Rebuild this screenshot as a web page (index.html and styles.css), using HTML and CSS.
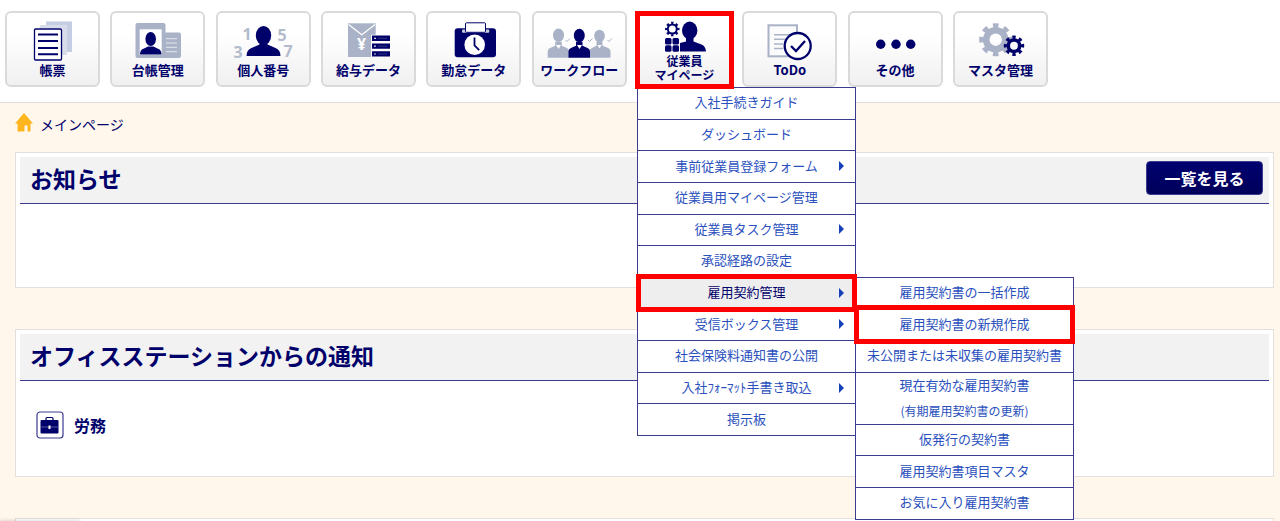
FILE: index.html
```html
<!DOCTYPE html>
<html lang="ja">
<head>
  <meta charset="UTF-8">
  <title>メインページ</title>
  <link rel="stylesheet" href="styles.css">
</head>
<body>

  <!-- Global navigation -->
  <header class="site-header">
    <ul class="global-nav">
      <li>
        <a class="tile" href="#">
          <svg class="icon" viewBox="2 2 91 49">
            <path class="pale" d="M41 10.500h26v30.500h-5v-26h-21z"/>
            <path class="pale2" d="M35 14h27v30h-5v-27h-22z"/>
            <rect x="29.500" y="18" width="27" height="31" rx="1" fill="#fff" stroke="#00006b" stroke-width="1.300"/>
            <path class="line" d="M33 23.500h20M33 30h20M33 37h20M33 43.300h20" stroke-width="2"/>
          </svg>
          <span class="label">帳票</span>
        </a>
      </li>
      <li>
        <a class="tile" href="#">
          <svg class="icon" viewBox="2 2 91 49">
            <path class="gray" d="M27.500 12h26q2 0 2 2v7.500h13.500q2 0 2 2v21.500q0 2-2 2h-41.500q-2 0-2-2v-31q0-2 2-2z"/>
            <rect x="29.700" y="18.300" width="22" height="25.400" fill="#fff"/>
            <ellipse class="navy" cx="40.700" cy="28" rx="5.300" ry="7"/>
            <path class="navy" d="M30 43.500q0-5 4-6l4-2h5.500l4 2q4 1 4 6z"/>
            <path d="M56 27.700h11M56 32h11M56 36.300h11M56 40.700h11" stroke="#e4e7ee" stroke-width="1"/>
          </svg>
          <span class="label">台帳管理</span>
        </a>
      </li>
      <li>
        <a class="tile" href="#">
          <svg class="icon" viewBox="2 2 91 49">
            <g class="digits">
              <text x="31" y="29">1</text>
              <text x="22" y="47">3</text>
              <text x="66" y="30">5</text>
              <text x="72" y="46">7</text>
            </g>
            <ellipse class="navy" cx="47.500" cy="24.500" rx="7.700" ry="9.500"/>
            <path class="navy" d="M30.500 45q0-6 5-8l8-3.500v-3h8v3l8 3.500q5 2 5 8z"/>
          </svg>
          <span class="label">個人番号</span>
        </a>
      </li>
      <li>
        <a class="tile" href="#">
          <svg class="icon" viewBox="2 2 91 49">
            <rect class="gray" x="27" y="12.300" width="27.700" height="33.700"/>
            <path d="M27.500 13.500l13.300 10.300 13.300-10.300" fill="none" stroke="#fff" stroke-width="1.200"/>
            <text class="yen" x="40.700" y="39">¥</text>
            <path d="M50 23.700h5v22.300h-5z" fill="#fafafa"/>
            <path class="navy" d="M51 24.500h18v5.500h-18zM51 32.500h18v5.300h-18zM51 40.300h18v5.300h-18z"/>
            <path d="M53 27.300h2M53 35.200h2M53 43h2" stroke="#d0d2e4" stroke-width="1.200"/>
            <path d="M57 27.300h9M57 35.200h9M57 43h9" stroke="#3f4288" stroke-width=".8"/>
          </svg>
          <span class="label">給与データ</span>
        </a>
      </li>
      <li>
        <a class="tile" href="#">
          <svg class="icon" viewBox="2 2 91 49">
            <rect class="navy" x="28.700" y="17.300" width="41.300" height="29" rx="3"/>
            <rect x="36" y="18.500" width="27.300" height="3.300" rx="1" fill="#c9ccda"/>
            <rect x="39.500" y="11.800" width="20" height="9.500" rx="1" fill="#fff" stroke="#00006b"/>
            <circle cx="48.700" cy="33.700" r="10.300" fill="#fff"/>
            <path class="line" d="M48.500 26.500v8l4.700 4.700" stroke-width="1.800"/>
          </svg>
          <span class="label">勤怠データ</span>
        </a>
      </li>
      <li>
        <a class="tile" href="#">
          <svg class="icon" viewBox="2 2 91 49">
            <g class="gray">
              <ellipse cx="26.500" cy="24.300" rx="5.500" ry="6.700"/>
              <path d="M15.700 46.700v-6q0-3 3-4l4.500-2v-4h6.500v4l4.500 2q3 1 3 4v6z"/>
              <ellipse cx="67.500" cy="25" rx="5.300" ry="6.300"/>
              <path d="M57.500 46.700v-6q0-3 3-4l4-2v-4h6v4l5 2q3 1 3 4v6z"/>
            </g>
            <g class="navy">
              <ellipse cx="47.300" cy="24.500" rx="5.500" ry="6.700"/>
              <path d="M36.500 46.700v-6q0-3 3-4l4.500-2v-4h6.500v4l4.500 2q3 1 3 4v6z"/>
            </g>
            <path d="M24 34l2.500 4 2.500-4zM45 34l2.500 4 2.500-4zM65.500 34l2 3.500 2-3.500z" fill="#fff"/>
            <path d="M33.500 29l1.500 1.500 3-3M56 29l1.500 1.500 3-3M75.500 29l1.500 1.500 3-3" fill="none" stroke="#a9b2c6"/>
          </svg>
          <span class="label">ワークフロー</span>
        </a>
      </li>
      <li class="has-menu">
        <a class="tile marked" href="#">
          <svg class="icon icon-short" viewBox="2 2 91 41">
            <circle cx="35.300" cy="18" r="4.500" fill="none" stroke="#00006b" stroke-width="2"/>
            <circle class="teeth navy-teeth" cx="35.300" cy="18" r="6" pathLength="16" stroke-width="2.500"/>
            <g class="navy">
              <rect x="28" y="27" width="6.500" height="6.500" rx="1.500"/>
              <rect x="35.500" y="27" width="6.500" height="6.500" rx="1.500"/>
              <rect x="28" y="34.300" width="6.500" height="6.500" rx="1.500"/>
              <rect x="35.500" y="34.300" width="6.500" height="6.500" rx="1.500"/>
            </g>
            <ellipse class="navy" cx="52.700" cy="19.500" rx="7.700" ry="9"/>
            <path class="navy" d="M43 40.500v-8.500l6-1.500v-4h7.500v4l8 3q4 1.500 4.500 7z"/>
          </svg>
          <span class="label label-two">従業員<br>マイページ</span>
        </a>

        <ul class="menu">
          <li><a href="#">入社手続きガイド</a></li>
          <li><a href="#">ダッシュボード</a></li>
          <li><a class="arrow" href="#">事前従業員登録フォーム</a></li>
          <li><a href="#">従業員用マイページ管理</a></li>
          <li><a class="arrow" href="#">従業員タスク管理</a></li>
          <li><a href="#">承認経路の設定</a></li>
          <li>
            <a class="arrow current marked" href="#">雇用契約管理</a>
            <ul class="menu submenu">
              <li><a href="#">雇用契約書の一括作成</a></li>
              <li><a class="marked" href="#">雇用契約書の新規作成</a></li>
              <li><a href="#">未公開または未収集の雇用契約書</a></li>
              <li><a href="#">現在有効な雇用契約書<small>(有期雇用契約書の更新)</small></a></li>
              <li><a href="#">仮発行の契約書</a></li>
              <li><a href="#">雇用契約書項目マスタ</a></li>
              <li><a href="#">お気に入り雇用契約書</a></li>
            </ul>
          </li>
          <li><a class="arrow" href="#">受信ボックス管理</a></li>
          <li><a href="#">社会保険料通知書の公開</a></li>
          <li><a class="arrow" href="#">入社ﾌｫｰﾏｯﾄ手書き取込</a></li>
          <li><a href="#">掲示板</a></li>
        </ul>
      </li>
      <li>
        <a class="tile" href="#">
          <svg class="icon" viewBox="2 2 91 49">
            <rect x="26.500" y="14.300" width="28.500" height="31" fill="#fbfbfb" stroke="#a9b2c6" stroke-width="2"/>
            <path d="M32 23.700h17M32 28.300h12M32 33h9M32 37.500h9" stroke="#a9b2c6" stroke-width="1.600"/>
            <circle cx="55.700" cy="35" r="13" fill="#fff" stroke="#00006b" stroke-width="2.300"/>
            <path class="line" d="M49 35l5 5 9-10" stroke-width="2.300"/>
          </svg>
          <span class="label">ToDo</span>
        </a>
      </li>
      <li>
        <a class="tile" href="#">
          <svg class="icon" viewBox="2 2 91 49">
            <g class="navy">
              <circle cx="32.700" cy="33.300" r="4.700"/>
              <circle cx="48" cy="33.300" r="4.700"/>
              <circle cx="62.700" cy="33.300" r="4.700"/>
            </g>
          </svg>
          <span class="label">その他</span>
        </a>
      </li>
      <li>
        <a class="tile" href="#">
          <svg class="icon" viewBox="2 2 91 49">
            <circle cx="42.700" cy="28.700" r="9.500" fill="none" stroke="#a9b2c6" stroke-width="6.500"/>
            <circle class="teeth gray-teeth" cx="42.700" cy="28.700" r="14" pathLength="16" stroke-width="5"/>
            <circle cx="61" cy="34.700" r="5.700" fill="#f8f8f8" stroke="#00006b" stroke-width="3.500"/>
            <circle class="teeth navy-teeth" cx="61" cy="34.700" r="8.500" pathLength="16" stroke-width="3.400"/>
          </svg>
          <span class="label">マスタ管理</span>
        </a>
      </li>
    </ul>
  </header>

  <!-- Breadcrumb -->
  <nav class="breadcrumb">
    <svg class="home" viewBox="0 0 18 19">
      <path d="M9 0l9 10.500h-2.500v8h-3v-6h-3v6h-7v-8h-2.500z" fill="#ffb61e"/>
    </svg>
    <a href="#">メインページ</a>
  </nav>

  <main class="content">
    <section class="panel">
      <div class="panel-head">
        <h2>お知らせ</h2>
        <button class="list-button" type="button">一覧を見る</button>
      </div>
      <div class="panel-body"></div>
    </section>

    <section class="panel">
      <div class="panel-head">
        <h2>オフィスステーションからの通知</h2>
      </div>
      <div class="panel-body">
        <h3 class="category">
          <svg class="category-icon" viewBox="0 0 28 28">
            <rect x="1" y="1" width="26" height="26" rx="3" fill="#fff" stroke="#3b3b90" stroke-width="1.200"/>
            <path d="M10 9.500v-2q0-1 1-1h5q1 0 1 1v2" fill="none" stroke="#00006b" stroke-width="1.200"/>
            <rect class="navy" x="4.500" y="9" width="18" height="13.500" rx="1"/>
            <path d="M5 16h17" stroke="#6a6aa8" stroke-width=".8"/>
            <rect x="12.500" y="14.500" width="2" height="3.500" fill="#fff"/>
          </svg>
          労務
        </h3>
      </div>
    </section>

    <section class="panel">
      <div class="panel-body"></div>
    </section>
  </main>

  <div class="status-shadow"></div>

</body>
</html>
```

FILE: styles.css
```css
* {
  box-sizing: border-box;
}

body {
  margin: 0;
  font-family: "Noto Sans CJK JP", sans-serif;
  font-size: 14px;
  color: #00006b;
  background-color: #fff7ec;
  overflow: hidden;
}

a {
  color: #00006b;
  text-decoration: none;
}

ul {
  list-style: none;
  margin: 0;
  padding: 0;
}

/* Header */
.site-header {
  padding: 11px 5px 15px;
  background-color: #fff;
  border-bottom: 1px solid #e2e0dc;
}

.global-nav {
  display: flex;
  justify-content: space-between;
  max-width: 1043px;
}

.tile {
  display: flex;
  flex-direction: column;
  width: 95px;
  height: 76px;
  border: 2px solid #dadada;
  border-radius: 6px;
  background: linear-gradient(#fff 30%, #f0f0f0);
}

.icon {
  display: block;
  height: 49px;
  flex-shrink: 0;
}

.icon-short {
  height: 41px;
}

.label {
  font-size: 13px;
  font-weight: bold;
  line-height: 16px;
  text-align: center;
  white-space: nowrap;
}

.label-two {
  font-size: 12px;
  line-height: 14px;
}

/* Icon colors */
.navy {
  fill: #00006b;
}

.gray {
  fill: #a9b2c6;
}

.pale {
  fill: #c5cde2;
}

.pale2 {
  fill: #d6dcea;
}

.line {
  fill: none;
  stroke: #00006b;
}

.teeth {
  fill: none;
  stroke-dasharray: 1 1;
  stroke-dashoffset: 0.5;
}

.navy-teeth {
  stroke: #00006b;
}

.gray-teeth {
  stroke: #a9b2c6;
}

.digits {
  fill: #b3bccd;
  font-family: "Noto Sans", sans-serif;
  font-size: 16px;
  font-weight: bold;
  text-anchor: middle;
}

.yen {
  fill: #fff;
  font-family: "Noto Sans", sans-serif;
  font-size: 16px;
  font-weight: bold;
  text-anchor: middle;
}

/* Red frames */
.marked {
  position: relative;
}

.marked::after {
  content: "";
  position: absolute;
  z-index: 3;
  inset: -4px -2px;
  border: 5px solid #f00;
}

.tile.marked::after {
  inset: -2px -4px -4px;
}

/* Dropdown menu */
.has-menu {
  position: relative;
}

.menu {
  position: absolute;
  z-index: 2;
  top: 76px;
  left: 0;
  display: grid;
  grid-auto-rows: 1fr;
  width: 219px;
  height: 349px;
  border: 1px solid #3b3b90;
  border-top: 0;
  background-color: #fff;
}

.menu li {
  position: relative;
}

.menu a {
  display: flex;
  flex-direction: column;
  align-items: center;
  justify-content: center;
  height: 100%;
  padding-bottom: 2px;
  border-top: 1px solid #3b3b90;
  font-size: 13px;
  line-height: 20px;
  color: #2a50bd;
  white-space: nowrap;
}

.menu small {
  padding-top: 8px;
  font-size: 12px;
  line-height: 16px;
}

.menu .current {
  color: #00006b;
  background-color: #eee;
}

.arrow::before {
  content: "";
  position: absolute;
  top: 50%;
  right: 11px;
  margin-top: -5px;
  border: 5px solid transparent;
  border-left-color: #1640b8;
  border-right: 0;
}

.submenu {
  top: 0;
  left: 217px;
  grid-template-rows: 1fr 1fr 1fr 52px 1fr 1fr 1fr;
  height: 243px;
}

/* Breadcrumb */
.breadcrumb {
  display: flex;
  align-items: center;
  gap: 7px;
  padding: 9px 15px 16px;
  line-height: 24px;
}

.home {
  width: 18px;
  height: 19px;
  margin-bottom: 4px;
}

/* Panels */
.content {
  display: flex;
  flex-direction: column;
  gap: 41px;
  padding: 0 6px 41px 15px;
}

.panel {
  padding: 4px;
  border: 1px solid #e2e0dc;
  background-color: #fff;
}

.panel-head {
  display: flex;
  align-items: center;
  justify-content: space-between;
  height: 47px;
  padding: 0 6px 5px 10px;
  border-bottom: 1px solid #3b3b90;
  background-color: #f2f2f2;
}

.panel-head h2 {
  margin: 0;
  font-size: 23px;
  line-height: 32px;
}

.list-button {
  width: 117px;
  height: 34px;
  border: 1px solid #3b3b90;
  border-radius: 4px;
  background: linear-gradient(#000070, #00005a);
  color: #fff;
  font-family: inherit;
  font-size: 16px;
  font-weight: bold;
  line-height: 24px;
}

.panel-body {
  min-height: 79px;
  padding: 30px 16px 33px;
}

.category {
  display: flex;
  align-items: center;
  gap: 10px;
  margin: 0;
  font-size: 16px;
  line-height: 24px;
}

.category-icon {
  width: 28px;
  height: 28px;
}

/* Soft shadow in the bottom left corner */
.status-shadow {
  position: fixed;
  bottom: -20px;
  left: 0;
  width: 80px;
  height: 20px;
  box-shadow: 0 0 4px rgba(0, 0, 0, 0.2);
}
```
